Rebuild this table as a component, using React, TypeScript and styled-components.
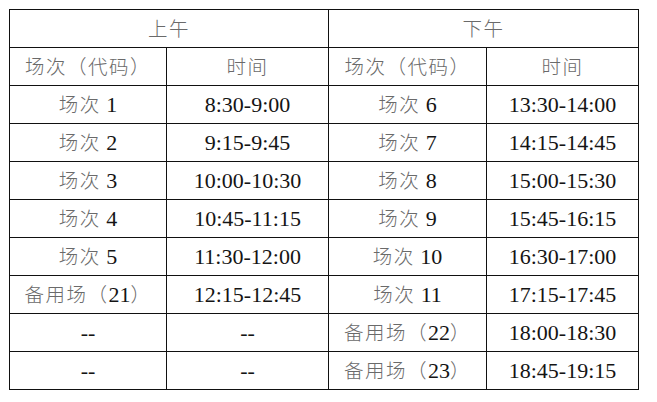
import React from "react";
import styled, { createGlobalStyle } from "styled-components";

const Global = createGlobalStyle`
  html, body { margin: 0; padding: 0; background: #ffffff; }
  body { font-family: "Liberation Serif", "Times New Roman", serif; }
`;

const Page = styled.div`
  padding: 9px 0 0 9px;
`;

const Table = styled.table`
  border-collapse: collapse;
  table-layout: fixed;
  width: 630px;
  font-family: "Liberation Serif", "Noto Sans CJK SC", serif;
  font-size: 22px;
  color: #141414;
`;

const Cell = styled.td`
  border: 1px solid #111111;
  height: 37px;
  padding: 0;
  text-align: center;
  vertical-align: middle;
  white-space: nowrap;
  line-height: 1;
`;

const Han = styled.span`
  font-family: "Noto Sans CJK SC", sans-serif;
  font-size: 19.5px;
  font-weight: 300;
  letter-spacing: 1.5px;
  color: #6a6a6a;
`;

const Row = styled.tr``;

type Slot = { name: React.ReactNode; time: string };

const am: Slot[] = [
  { name: <><Han>场次</Han> 1</>, time: "8:30-9:00" },
  { name: <><Han>场次</Han> 2</>, time: "9:15-9:45" },
  { name: <><Han>场次</Han> 3</>, time: "10:00-10:30" },
  { name: <><Han>场次</Han> 4</>, time: "10:45-11:15" },
  { name: <><Han>场次</Han> 5</>, time: "11:30-12:00" },
  { name: <><Han>备用场（</Han>21<Han>）</Han></>, time: "12:15-12:45" },
  { name: "--", time: "--" },
  { name: "--", time: "--" },
];

const pm: Slot[] = [
  { name: <><Han>场次</Han> 6</>, time: "13:30-14:00" },
  { name: <><Han>场次</Han> 7</>, time: "14:15-14:45" },
  { name: <><Han>场次</Han> 8</>, time: "15:00-15:30" },
  { name: <><Han>场次</Han> 9</>, time: "15:45-16:15" },
  { name: <><Han>场次</Han> 10</>, time: "16:30-17:00" },
  { name: <><Han>场次</Han> 11</>, time: "17:15-17:45" },
  { name: <><Han>备用场（</Han>22<Han>）</Han></>, time: "18:00-18:30" },
  { name: <><Han>备用场（</Han>23<Han>）</Han></>, time: "18:45-19:15" },
];

export default function App() {
  return (
    <>
      <Global />
      <Page>
        <Table>
          <colgroup>
            <col style={{ width: 157 }} />
            <col style={{ width: 162 }} />
            <col style={{ width: 158 }} />
            <col style={{ width: 152 }} />
          </colgroup>
          <tbody>
            <Row>
              <Cell colSpan={2}><Han>上午</Han></Cell>
              <Cell colSpan={2}><Han>下午</Han></Cell>
            </Row>
            <Row>
              <Cell><Han>场次（代码）</Han></Cell>
              <Cell><Han>时间</Han></Cell>
              <Cell><Han>场次（代码）</Han></Cell>
              <Cell><Han>时间</Han></Cell>
            </Row>
            {am.map((a, i) => (
              <Row key={i}>
                <Cell>{a.name}</Cell>
                <Cell>{a.time}</Cell>
                <Cell>{pm[i].name}</Cell>
                <Cell>{pm[i].time}</Cell>
              </Row>
            ))}
          </tbody>
        </Table>
      </Page>
    </>
  );
}
